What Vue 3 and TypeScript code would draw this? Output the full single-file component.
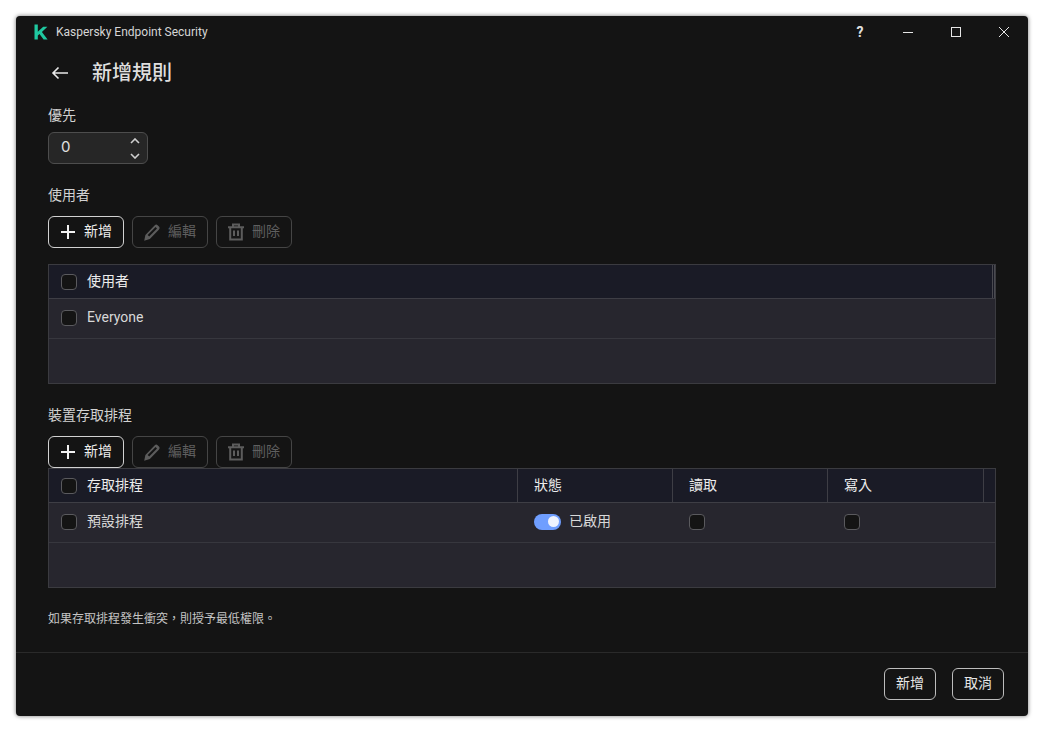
<script setup lang="ts">
interface Col { label: string; width: string }
const scheduleCols: Col[] = [
  { label: '狀態', width: '155px' },
  { label: '讀取', width: '155px' },
  { label: '寫入', width: '156px' },
]
</script>

<template>
  <div class="stage">
    <div class="window">
      <header class="titlebar">
        <svg class="logo" width="14" height="16" viewBox="0 0 14 16">
          <path d="M0.5 0.5H3.8V15.5H0.5Z M3.8 7.8L9.2 2.8H13.4L7.9 8L13.6 15.5H9.6L5.5 10L3.8 11.6Z" fill="#1fc8a0" />
        </svg>
        <span class="app-name">Kaspersky Endpoint Security</span>
        <div class="win-controls">
          <span class="ctl help">?</span>
          <span class="ctl">
            <svg width="12" height="12" viewBox="0 0 12 12"><path d="M1 6.5H11" stroke="#e6e6e6" stroke-width="1" /></svg>
          </span>
          <span class="ctl">
            <svg width="12" height="12" viewBox="0 0 12 12"><rect x="1.5" y="1.5" width="9" height="9" fill="none" stroke="#e6e6e6" stroke-width="1" /></svg>
          </span>
          <span class="ctl">
            <svg width="12" height="12" viewBox="0 0 12 12"><path d="M1 1L11 11M11 1L1 11" stroke="#e6e6e6" stroke-width="1" /></svg>
          </span>
        </div>
      </header>

      <main class="content">
        <div class="heading">
          <svg class="back" width="18" height="14" viewBox="0 0 18 14">
            <path d="M17 7H2M7.5 1.5L2 7L7.5 12.5" fill="none" stroke="#e8e8e8" stroke-width="1.6" />
          </svg>
          <h1>新增規則</h1>
        </div>

        <label class="label first">優先</label>
        <div class="spinner">
          <span class="spin-value">0</span>
          <span class="arrows">
            <svg width="10" height="6" viewBox="0 0 10 6"><path d="M1 5L5 1L9 5" fill="none" stroke="#cfcfcf" stroke-width="1.6" /></svg>
            <svg width="10" height="6" viewBox="0 0 10 6"><path d="M1 1L5 5L9 1" fill="none" stroke="#cfcfcf" stroke-width="1.6" /></svg>
          </span>
        </div>

        <label class="label second">使用者</label>
        <div class="toolbar">
          <button class="btn active">
            <svg width="16" height="16" viewBox="0 0 16 16"><path d="M8 1V15M1 8H15" stroke="#f2f2f2" stroke-width="2" /></svg>
            <span class="btn-text">新增</span>
          </button>
          <button class="btn disabled">
            <svg width="18" height="20" viewBox="0 0 18 20"><path d="M1.2 18.8L2.4 13L11.8 3.2C12.6 2.4 13.8 2.4 14.6 3.2L16 4.6C16.8 5.4 16.8 6.6 16 7.4L6.8 17Z" fill="#5c5c5c" /><path d="M4.6 13L12.6 5L14 6.4L6.2 14.6Z" fill="#141414" /></svg>
            <span class="btn-text">編輯</span>
          </button>
          <button class="btn disabled">
            <svg width="18" height="18" viewBox="0 0 18 18"><path d="M1 4.2H17M6 4V1.5H12V4M3.2 4.2V16.5H14.8V4.2M7 7.5V13M11 7.5V13" fill="none" stroke="#5c5c5c" stroke-width="2" /></svg>
            <span class="btn-text">刪除</span>
          </button>
        </div>

        <div class="table users">
          <div class="thead">
            <div class="cell grow">
              <span class="check"></span>
              <span class="lift">使用者</span>
            </div>
            <div class="tail narrow"></div>
          </div>
          <div class="row">
            <div class="cell grow">
              <span class="check"></span>
              <span class="body-text">Everyone</span>
            </div>
          </div>
          <div class="empty"></div>
        </div>

        <label class="label third">裝置存取排程</label>
        <div class="toolbar">
          <button class="btn active">
            <svg width="16" height="16" viewBox="0 0 16 16"><path d="M8 1V15M1 8H15" stroke="#f2f2f2" stroke-width="2" /></svg>
            <span class="btn-text">新增</span>
          </button>
          <button class="btn disabled">
            <svg width="18" height="20" viewBox="0 0 18 20"><path d="M1.2 18.8L2.4 13L11.8 3.2C12.6 2.4 13.8 2.4 14.6 3.2L16 4.6C16.8 5.4 16.8 6.6 16 7.4L6.8 17Z" fill="#5c5c5c" /><path d="M4.6 13L12.6 5L14 6.4L6.2 14.6Z" fill="#141414" /></svg>
            <span class="btn-text">編輯</span>
          </button>
          <button class="btn disabled">
            <svg width="18" height="18" viewBox="0 0 18 18"><path d="M1 4.2H17M6 4V1.5H12V4M3.2 4.2V16.5H14.8V4.2M7 7.5V13M11 7.5V13" fill="none" stroke="#5c5c5c" stroke-width="2" /></svg>
            <span class="btn-text">刪除</span>
          </button>
        </div>

        <div class="table schedule">
          <div class="thead">
            <div class="cell grow">
              <span class="check"></span>
              <span class="lift">存取排程</span>
            </div>
            <div v-for="c in scheduleCols" :key="c.label" class="cell col sep" :style="{ width: c.width }">
              <span class="lift">{{ c.label }}</span>
            </div>
            <div class="tail sep"></div>
          </div>
          <div class="row">
            <div class="cell grow">
              <span class="check"></span>
              <span class="body-text">預設排程</span>
            </div>
            <div class="cell col bodycol" :style="{ width: scheduleCols[0].width }">
              <span class="toggle"><span class="knob"></span></span>
              <span class="body-text">已啟用</span>
            </div>
            <div class="cell col bodycol" :style="{ width: scheduleCols[1].width }"><span class="check"></span></div>
            <div class="cell col bodycol" :style="{ width: scheduleCols[2].width }"><span class="check"></span></div>
            <div class="tail"></div>
          </div>
          <div class="empty"></div>
        </div>

        <p class="note">如果存取排程發生衝突，則授予最低權限。</p>
      </main>

      <footer class="footer">
        <button class="btn foot"><span class="btn-text">新增</span></button>
        <button class="btn foot"><span class="btn-text">取消</span></button>
      </footer>
    </div>
  </div>
</template>

<style scoped>
.stage {
  width: 1044px;
  height: 732px;
  padding: 16px;
  box-sizing: border-box;
  background: #fff;
  font-family: Roboto, "Noto Sans CJK TC", sans-serif;
  line-height: 20px;
}
.window {
  width: 1012px;
  height: 700px;
  background: #141414;
  border-radius: 4px;
  box-shadow: 0 0 4px rgba(0, 0, 0, 0.55);
  display: flex;
  flex-direction: column;
  color: #e6e6e6;
  overflow: hidden;
}
.titlebar {
  height: 32px;
  flex: none;
  display: flex;
  align-items: center;
  padding-left: 18px;
}
.logo { flex: none; }
.app-name {
  margin-left: 8px;
  font-size: 12px;
  color: #d6d6d6;
}
.win-controls {
  margin-left: auto;
  display: flex;
}
.ctl {
  width: 48px;
  height: 32px;
  display: flex;
  align-items: center;
  justify-content: center;
}
.help {
  font-size: 14px;
  font-weight: 700;
  color: #e0e0e0;
}
.content {
  flex: 1;
  padding: 0 32px;
  display: flex;
  flex-direction: column;
  align-items: flex-start;
}
.heading {
  height: 50px;
  display: flex;
  align-items: center;
  padding-left: 3px;
}
.back { flex: none; }
h1 {
  margin: 0 0 0 23px;
  font-size: 20px;
  line-height: 50px;
  font-weight: 500;
  color: #dedede;
}
.label {
  display: block;
  font-size: 14px;
  line-height: 20px;
  color: #d2d2d2;
}
.first { margin-top: 7px; }
.second { margin-top: 21px; }
.third { margin-top: 21px; }
.spinner {
  margin-top: 7px;
  width: 100px;
  height: 32px;
  box-sizing: border-box;
  border: 1px solid #4d4d4d;
  border-radius: 6px;
  background: #262626;
  display: flex;
  align-items: center;
  justify-content: space-between;
  padding: 0 7px 0 12px;
}
.spin-value {
  font-family: Inter, sans-serif;
  font-size: 15px;
  line-height: 28px;
  height: 28px;
  margin-top: -2px;
  color: #e0e0e0;
}
.arrows {
  display: flex;
  flex-direction: column;
  gap: 9px;
}
.toolbar {
  margin-top: 11px;
  display: flex;
  gap: 8px;
}
.btn {
  height: 32px;
  box-sizing: border-box;
  width: 76px;
  border-radius: 6px;
  background: transparent;
  font-family: inherit;
  font-size: 14px;
  line-height: 20px;
  display: flex;
  align-items: center;
  justify-content: center;
  gap: 8px;
  padding: 0;
}
.btn-text { margin-bottom: 2px; }
.active {
  border: 1px solid #d2d2d2;
  color: #ececec;
}
.disabled {
  border: 1px solid #454545;
  color: #5f5f5f;
}
.disabled svg { margin: 0 -1px; }
.table {
  width: 948px;
  box-sizing: border-box;
  border: 1px solid #3b3b40;
  background: #27262e;
  display: flex;
  flex-direction: column;
}
.users { margin-top: 16px; height: 120px; }
.schedule { height: 120px; }
.thead {
  height: 34px;
  flex: none;
  box-sizing: border-box;
  display: flex;
  background: #1a1b26;
  border-bottom: 1px solid #3e3e45;
  font-size: 14px;
  font-weight: 400;
  color: #ececec;
}
.lift { margin-bottom: 2px; }
.row {
  height: 40px;
  flex: none;
  box-sizing: border-box;
  display: flex;
  border-bottom: 1px solid #37373e;
  padding-bottom: 2px;
}
.empty { flex: 1; }
.cell {
  display: flex;
  align-items: center;
  box-sizing: border-box;
}
.grow {
  flex: 1;
  padding-left: 12px;
  gap: 10px;
  min-width: 0;
}
.col {
  flex: none;
  padding-left: 16px;
}
.sep { border-left: 1px solid #3e3e45; }
.bodycol {
  gap: 8px;
  padding-left: 17px;
}
.tail {
  flex: none;
  width: 12px;
  box-sizing: border-box;
}
.tail.narrow {
  width: 3px;
  border-left: 1px solid #4a4a50;
  border-right: 1px solid #4a4a50;
}
.check {
  width: 16px;
  height: 16px;
  flex: none;
  box-sizing: border-box;
  border: 1px solid #5a5a5e;
  border-radius: 4px;
  background: #141414;
}
.body-text {
  font-size: 14px;
  color: #d8d8d8;
  margin-bottom: 2px;
}
.toggle {
  width: 27px;
  height: 16px;
  flex: none;
  border-radius: 8px;
  background: #6f9eff;
  position: relative;
}
.knob {
  position: absolute;
  top: 2.5px;
  right: 2px;
  width: 11px;
  height: 11px;
  border-radius: 50%;
  background: #eef3ff;
}
.note {
  margin: 22px 0 0;
  font-size: 12px;
  line-height: 18px;
  color: #c4c4c4;
}
.footer {
  height: 64px;
  flex: none;
  box-sizing: border-box;
  border-top: 1px solid #2a2a2a;
  display: flex;
  align-items: center;
  justify-content: flex-end;
  gap: 16px;
  padding: 0 24px 1px 0;
}
.foot {
  width: 52px;
  border: 1px solid #bdbdbd;
  color: #e6e6e6;
}
</style>
